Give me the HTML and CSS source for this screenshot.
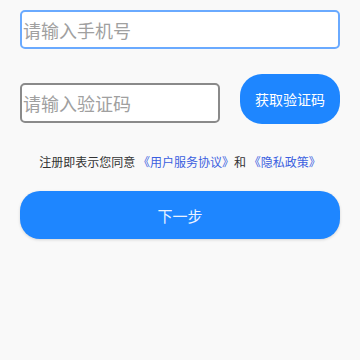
FILE: index.html
```html
<!DOCTYPE html>
<html lang="zh-CN">
<head>
    <meta charset="UTF-8">
    <meta name="viewport" content="width=device-width, initial-scale=1.0">
    <title>注册</title>
    <link rel="stylesheet" href="styles.css">
</head>
<body>
    <div class="container">
        <input type="text" class="field phone" placeholder="请输入手机号">
        <div class="code-row">
            <input type="text" class="field code" placeholder="请输入验证码">
            <button class="code-btn">获取验证码</button>
        </div>
        <p class="agree">注册即表示您同意 <a href="#">《用户服务协议》</a>和 <a href="#">《隐私政策》</a></p>
        <button class="next-btn">下一步</button>
    </div>
</body>
</html>
```

FILE: styles.css
```css
html, body {
    margin: 0;
    background-color: #f9f9f9;
}
body {
    font-family: "Noto Sans CJK SC", "Noto Sans", sans-serif;
}
.container {
    padding: 10px 20px;
}
.field {
    display: block;
    box-sizing: border-box;
    height: 39px;
    padding: 0 1px;
    font-family: inherit;
    font-size: 18px;
    background: #fff;
    border-radius: 5px;
    outline: none;
}
.field::placeholder {
    color: #a0a0a0;
}
.phone {
    width: 100%;
    border: 2px solid #6aaaff;
}
.code-row {
    display: flex;
    align-items: flex-end;
    gap: 20px;
    margin-top: 25px;
}
.code {
    width: 200px;
    height: 40px;
    margin-bottom: 1px;
    border: 2px solid #8a8a8a;
}
.code-btn {
    width: 100px;
    height: 50px;
    border: none;
    border-radius: 22px;
    background-color: #1e86ff;
    color: #fff;
    font-family: inherit;
    font-size: 14px;
}
.agree {
    margin: 28px 0 0;
    text-align: center;
    font-size: 12px;
    color: #333;
    line-height: 20px;
}
.agree a {
    color: #3b5fe0;
    text-decoration: none;
}
.next-btn {
    display: block;
    width: 100%;
    height: 48px;
    margin-top: 19px;
    border: none;
    border-radius: 20px;
    background-color: #1e86ff;
    color: #eaf2ff;
    font-family: inherit;
    font-size: 15px;
    box-shadow: 0 1px 3px rgba(0, 0, 0, 0.15);
}
```
